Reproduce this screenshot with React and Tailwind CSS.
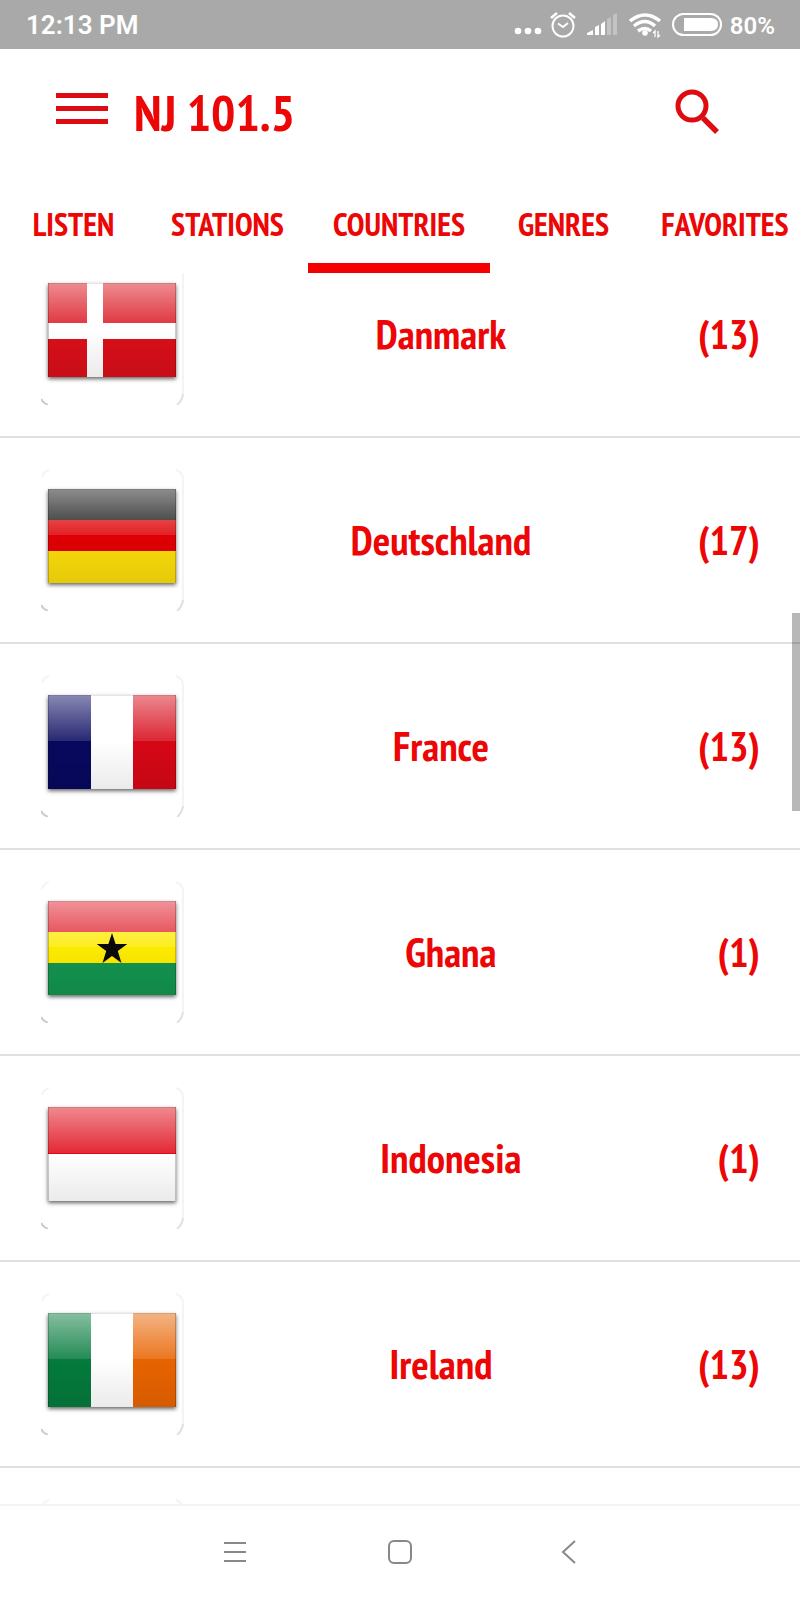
import React, { useState } from "react";

const tabs = [
  { name: "LISTEN", width: "w-[147px]" },
  { name: "STATIONS", width: "w-[161px]" },
  { name: "COUNTRIES", width: "w-[182px]" },
  { name: "GENRES", width: "w-[147px]" },
  { name: "FAVORITES", width: "w-[176px]" },
];

const countries = [
  {
    name: "Danmark",
    count: 13,
    flag: (
      <>
        <rect width="128" height="94" fill="#d90f19" />
        <rect x="39" width="16" height="94" fill="#fff" />
        <rect y="40" width="128" height="16" fill="#fff" />
      </>
    ),
  },
  {
    name: "Deutschland",
    count: 17,
    flag: (
      <>
        <rect width="128" height="31" fill="#111" />
        <rect y="31" width="128" height="31" fill="#de0004" />
        <rect y="62" width="128" height="32" fill="#fadb0a" />
      </>
    ),
  },
  {
    name: "France",
    count: 13,
    flag: (
      <>
        <rect width="43" height="94" fill="#08085f" />
        <rect x="43" width="42" height="94" fill="#fff" />
        <rect x="85" width="43" height="94" fill="#d60716" />
      </>
    ),
  },
  {
    name: "Ghana",
    count: 1,
    flag: (
      <>
        <rect width="128" height="31" fill="#e01e2b" />
        <rect y="31" width="128" height="31" fill="#fdea00" />
        <rect y="62" width="128" height="32" fill="#13944f" />
      </>
    ),
    emblem: (
      <path
        d="M64 32l3.600 11h11.700l-9.500 7 3.700 12-9.500-7-9.500 7 3.700-12-9.500-7h11.700z"
        fill="#0a0a0a"
      />
    ),
  },
  {
    name: "Indonesia",
    count: 1,
    flag: (
      <>
        <rect width="128" height="47" fill="#df0a17" />
        <rect y="47" width="128" height="47" fill="#fff" />
      </>
    ),
  },
  {
    name: "Ireland",
    count: 13,
    flag: (
      <>
        <rect width="43" height="94" fill="#047a3c" />
        <rect x="43" width="42" height="94" fill="#fff" />
        <rect x="85" width="43" height="94" fill="#e86300" />
      </>
    ),
  },
];

const StatusIcons = () => (
  <svg width="208" height="49" viewBox="514 0 208 49" fill="none" aria-hidden="true">
    <g fill="#fff">
      <circle cx="518" cy="31" r="3.3" />
      <circle cx="528" cy="31" r="3.3" />
      <circle cx="538" cy="31" r="3.3" />
    </g>
    {/* alarm */}
    <g stroke="#fff" strokeWidth="2">
      <circle cx="563" cy="26" r="10.500" />
      <path d="M558 23.500l5 3.500 5-4" />
      <path d="M551 18l6-5M575 18l-6-5" strokeWidth="2.600" />
    </g>
    {/* signal */}
    <path d="M587 35v-2l6-3v5zM595 27l4-2v10h-4zM601 24l4-3v14h-4z" fill="#fff" />
    <path d="M607 19l4-2v18h-4zM613 15l4-2v22h-4z" fill="#fff" fillOpacity=".3" />
    {/* wifi */}
    <g stroke="#fff" strokeWidth="3.500">
      <path d="M630 21q15-12 30 0" />
      <path d="M634 26q11-9 21 0" />
      <path d="M638 31q7-5 13 0" />
    </g>
    <circle cx="645" cy="33" r="2.800" fill="#fff" />
    <path d="M655 37v-6l-2 2M658 31v6l2-2" stroke="#fff" strokeWidth="1.300" />
    {/* battery */}
    <rect x="673" y="14" width="48" height="21" rx="10.500" stroke="#fff" strokeWidth="2" />
    <path d="M684 18h27q7 0 7 6.500t-7 6.500h-27z" fill="#fff" />
  </svg>
);

const Flag = ({ country }) => (
  <svg
    viewBox="0 0 128 94"
    className="w-32 h-[94px] shadow-[0_2px_4px_rgba(0,0,0,0.6)]"
    role="img"
    aria-label={country.name + " flag"}
  >
    <defs>
      <linearGradient id="gloss" x1="0" y1="0" x2="0" y2="1">
        <stop offset="0" stopColor="#fff" stopOpacity=".52" />
        <stop offset="1" stopColor="#fff" stopOpacity=".13" />
      </linearGradient>
      <linearGradient id="shade" x1="0" y1="0" x2="0" y2="1">
        <stop offset="0" stopColor="#000" stopOpacity="0" />
        <stop offset="1" stopColor="#000" stopOpacity=".08" />
      </linearGradient>
    </defs>
    {country.flag}
    <rect width="128" height="46" fill="url(#gloss)" />
    <rect y="46" width="128" height="48" fill="url(#shade)" />
    {country.emblem}
    <path d="M.5 0v94M127.500 0v94" stroke="#000" strokeOpacity=".2" />
    <path d="M0 .5h128" stroke="#000" strokeOpacity=".1" />
  </svg>
);

const FlagCard = ({ children }) => (
  <div className="relative w-[143px] h-[142px] shrink-0 pt-5 pl-[7px]">
    {/* card edge, only the right side and the corners catch a shadow */}
    <svg
      width="143"
      height="142"
      fill="none"
      className="absolute left-0 top-0"
      aria-hidden="true"
    >
      <path d="M1 8q1-5 7-7M135 1q7 2 7 10v120" stroke="#f4f4f4" strokeWidth="2" />
      <path d="M0 136q2 4 7 6" stroke="#ccc" strokeWidth="2" />
      <path d="M142 131q-1 7-6 11" stroke="#e0e0e0" strokeWidth="2" />
    </svg>
    {children}
  </div>
);

const CountryRow = ({ country }) => (
  <li className="flex items-center py-[31px] pl-[41px] pr-10 border-b-2 border-[#e0e0e0]">
    <FlagCard>
      <Flag country={country} />
    </FlagCard>
    <span className="flex-1 text-center">{country.name}</span>
    <span>({country.count})</span>
  </li>
);

const App = () => {
  const [active, setActive] = useState("COUNTRIES");

  return (
    <div className="flex flex-col h-screen overflow-hidden bg-white text-[#ec0606] font-bold font-['PT_Sans_Narrow','Liberation_Sans_Narrow','Liberation_Sans',sans-serif]">
      <div className="flex items-center h-[49px] shrink-0 pl-[26px] pr-[25px] bg-[#a9a9a9] text-white font-semibold font-[Roboto,sans-serif]">
        <span className="flex-1 pt-0.5 text-[26px]">12:13 PM</span>
        <StatusIcons />
        <span className="ml-2 pt-0.5 text-2xl">80%</span>
      </div>

      <header className="flex items-center h-[121px] shrink-0 pl-14 pr-20">
        <button type="button" aria-label="Menu" className="flex flex-col gap-2 w-[52px] pb-0.5">
          <span className="h-[5px] bg-[#de0c10]" />
          <span className="h-[5px] bg-[#de0c10]" />
          <span className="h-[5px] bg-[#de0c10]" />
        </button>
        <h1 className="flex-1 ml-[26px] pt-1 text-[51px] leading-[72px]">NJ 101.5</h1>
        <button type="button" aria-label="Search" className="pt-0.5">
          <svg width="46" height="46" viewBox="0 0 46 46" fill="none" stroke="#de0c10">
            <circle cx="18" cy="18" r="14" strokeWidth="5" />
            <path d="M29 30l14 14" strokeWidth="5.500" />
          </svg>
        </button>
      </header>

      <nav className="flex h-[103px] shrink-0 overflow-hidden text-[32px]">
        {tabs.map((tab) => (
          <button
            key={tab.name}
            type="button"
            onClick={() => setActive(tab.name)}
            className={`${tab.width} shrink-0 pt-3.5 text-center border-b-10 ${
              active === tab.name ? "border-[#f40000]" : "border-transparent"
            }`}
          >
            {tab.name}
          </button>
        ))}
      </nav>

      <main className="relative flex-1 min-h-0 overflow-hidden text-[41px]">
        <ul className="-mt-[41px]">
          {countries.map((country) => (
            <CountryRow key={country.name} country={country} />
          ))}
          <li className="py-[31px] px-[41px]">
            <FlagCard />
          </li>
        </ul>
        {/* scroll position */}
        <div className="absolute right-0 top-[340px] w-2 h-[198px] bg-black/28" />
      </main>

      <footer className="flex items-center justify-center gap-[141px] h-24 shrink-0 pb-0.5 border-t-2 border-[#f3f3f3]">
        <button type="button" aria-label="Recent apps">
          <svg width="24" height="24" fill="none" stroke="#888" strokeWidth="2">
            <path d="M1 3h22M1 12h22M1 21h22" />
          </svg>
        </button>
        <button type="button" aria-label="Home">
          <svg width="24" height="24" fill="none" stroke="#888" strokeWidth="2">
            <rect x="1" y="1" width="22" height="22" rx="5" />
          </svg>
        </button>
        <button type="button" aria-label="Back">
          <svg width="24" height="24" fill="none" stroke="#888" strokeWidth="2">
            <path d="M22 1L10 12l12 11" />
          </svg>
        </button>
      </footer>
    </div>
  );
};

export default App;
